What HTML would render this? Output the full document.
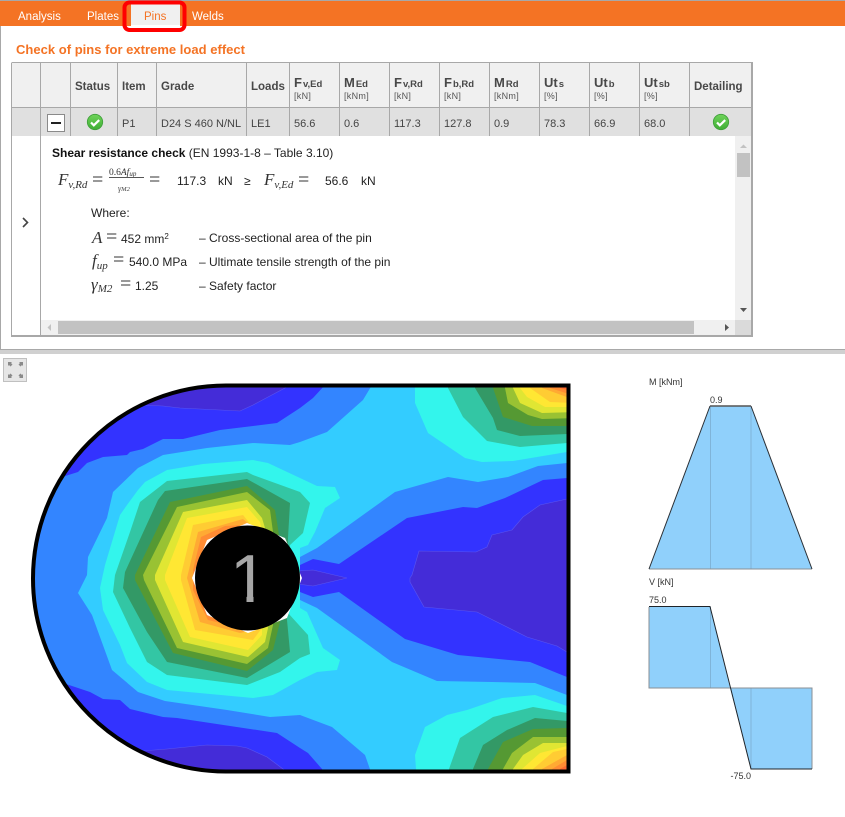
<!DOCTYPE html>
<html><head><meta charset="utf-8"><style>
html,body{margin:0;padding:0;background:#fff;width:845px;height:817px;overflow:hidden}
svg{display:block;position:absolute;left:0;top:0}
text{font-family:"Liberation Sans",Arial,sans-serif;white-space:pre}
.h{font-weight:bold;font-size:11.5px;fill:#484848}
.hb{font-weight:bold;font-size:13px;fill:#484848}
.hs{font-weight:bold;font-size:9.5px;fill:#484848}
.u{font-size:9px;fill:#555;letter-spacing:.3px}
.c{font-size:11px;fill:#444}
.b{font-size:12px;fill:#222}
.m{font-family:"Liberation Serif",serif;font-style:italic;font-size:17px;fill:#333}
.ms{font-family:"Liberation Serif",serif;font-style:italic;font-size:11px;fill:#333}
.eq{font-family:"Liberation Serif",serif;font-size:20px;fill:#333}
.ch{font-size:9px;fill:#333}
.l{stroke:#a8a8a8;stroke-width:1;shape-rendering:crispEdges}
</style></head><body>
<svg width="845" height="817" viewBox="0 0 845 817" xmlns="http://www.w3.org/2000/svg">
<defs><clipPath id="cp"><path d="M568.5 385.5H226A193 193 0 0 0 226 771.5H568.5Z"/></clipPath>
<linearGradient id="g" x1="0" y1="0" x2="0" y2="1"><stop offset="0" stop-color="#6fd35a"/><stop offset="1" stop-color="#3fae35"/></linearGradient></defs>

<!-- top bar -->
<rect x="0" y="0" width="845" height="1" fill="#a8a8a8"/>
<rect x="0" y="1" width="845" height="25" fill="#f47324"/>
<rect x="0" y="26" width="1" height="324" fill="#a8a8a8"/>
<rect x="131" y="4" width="49" height="22" fill="#f0f0f0"/>
<rect x="131" y="25" width="49" height="1" fill="#fff"/>
<text x="18" y="20" font-size="11.5" fill="#fff">Analysis</text>
<text x="87" y="20" font-size="11.5" fill="#fff">Plates</text>
<text x="144" y="20" font-size="11.5" fill="#f47324">Pins</text>
<text x="192" y="20" font-size="11.5" fill="#fff">Welds</text>
<rect x="124.500" y="2.500" width="60" height="27.500" rx="5" fill="none" stroke="#f00" stroke-width="4"/>

<text x="16" y="54" font-size="13" font-weight="bold" fill="#f47324" textLength="229" lengthAdjust="spacing">Check of pins for extreme load effect</text>

<!-- table -->
<rect x="12" y="63" width="740" height="45" fill="#f0f0f0"/>
<rect x="12" y="108" width="740" height="28" fill="#e0e0e0"/>
<g class="l">
<path d="M11.5 62.5H751.5M11.5 107.5H751.5" fill="none"/>
<path d="M70.5 63V136M117.5 63V136M156.5 63V136M246.5 63V136M289.5 63V136M339.5 63V136M389.5 63V136M439.5 63V136M489.5 63V136M539.5 63V136M589.5 63V136M639.5 63V136M689.5 63V136M40.5 63V336M11.5 63V336" fill="none"/>
</g>
<rect x="751" y="62" width="2" height="275" fill="#a8a8a8"/>
<rect x="11" y="335" width="742" height="2" fill="#a8a8a8"/>

<text class="h" x="75" y="90">Status</text>
<text class="h" x="122" y="90">Item</text>
<text class="h" x="161" y="90">Grade</text>
<text class="h" x="251" y="90">Loads</text>
<text class="h" x="694" y="90">Detailing</text>

<text class="hb" x="294" y="87">F<tspan class="hs" dx="1">v,Ed</tspan></text><text class="u" x="294" y="99">[kN]</text>
<text class="hb" x="344" y="87">M<tspan class="hs" dx="1">Ed</tspan></text><text class="u" x="344" y="99">[kNm]</text>
<text class="hb" x="394" y="87">F<tspan class="hs" dx="1">v,Rd</tspan></text><text class="u" x="394" y="99">[kN]</text>
<text class="hb" x="444" y="87">F<tspan class="hs" dx="1">b,Rd</tspan></text><text class="u" x="444" y="99">[kN]</text>
<text class="hb" x="494" y="87">M<tspan class="hs" dx="1">Rd</tspan></text><text class="u" x="494" y="99">[kNm]</text>
<text class="hb" x="544" y="87">Ut<tspan class="hs" dx="1">s</tspan></text><text class="u" x="544" y="99">[%]</text>
<text class="hb" x="594" y="87">Ut<tspan class="hs" dx="1">b</tspan></text><text class="u" x="594" y="99">[%]</text>
<text class="hb" x="644" y="87">Ut<tspan class="hs" dx="1">sb</tspan></text><text class="u" x="644" y="99">[%]</text>

<text class="c" x="122" y="127">P1</text>
<text class="c" x="161" y="127">D24 S 460 N/NL</text>
<text class="c" x="251" y="127">LE1</text>
<text class="c" x="294" y="127">56.6</text>
<text class="c" x="344" y="127">0.6</text>
<text class="c" x="394" y="127">117.3</text>
<text class="c" x="444" y="127">127.8</text>
<text class="c" x="494" y="127">0.9</text>
<text class="c" x="544" y="127">78.3</text>
<text class="c" x="594" y="127">66.9</text>
<text class="c" x="644" y="127">68.0</text>

<rect x="47.500" y="114.500" width="17" height="17" fill="#fff" stroke="#8a8a8a"/>
<rect x="51" y="122" width="10" height="2" fill="#222"/>

<g><circle cx="95" cy="122" r="7.700" fill="url(#g)" stroke="#3f9f3a" stroke-width=".8"/><path d="M91 122.500l2.800 2.800 5.400-5.200" fill="none" stroke="#fff" stroke-width="2.200"/></g>
<g transform="translate(626,0)"><circle cx="95" cy="122" r="7.700" fill="url(#g)" stroke="#3f9f3a" stroke-width=".8"/><path d="M91 122.500l2.800 2.800 5.400-5.200" fill="none" stroke="#fff" stroke-width="2.200"/></g>

<!-- detail -->
<path d="M23 218l4.500 4.500-4.500 4.500" fill="none" stroke="#444" stroke-width="1.600"/>
<text class="b" x="52" y="157"><tspan font-weight="bold" fill="#111">Shear resistance check</tspan> (EN 1993-1-8 – Table 3.10)</text>

<text class="m" x="58" y="185">F<tspan class="ms" dx="0" dy="3">v,Rd</tspan></text>
<text class="eq" x="92" y="186">=</text>
<text font-size="9.500" fill="#333" x="109" y="175" style="font-family:'Liberation Serif',serif" font-style="italic"><tspan font-style="normal">0.6</tspan>Af<tspan font-size="7" dy="1">up</tspan></text>
<rect x="109" y="177" width="35" height="1" fill="#555"/>
<text x="118" y="191" font-size="8" fill="#444" style="font-family:'Liberation Serif',serif" font-style="italic">γ<tspan font-size="6.500">M2</tspan></text>
<text class="eq" x="149" y="186">=</text>
<text class="b" x="177" y="185">117.3</text>
<text class="b" x="218" y="185">kN</text>
<text class="b" x="244" y="185" font-size="10">≥</text>
<text class="m" x="264" y="185">F<tspan class="ms" dy="3">v,Ed</tspan></text>
<text class="eq" x="298" y="186">=</text>
<text class="b" x="325" y="185">56.6</text>
<text class="b" x="361" y="185">kN</text>

<text class="b" x="91" y="217">Where:</text>
<text class="m" x="92" y="243">A</text><text class="eq" x="106" y="243">=</text>
<text class="b" x="121" y="243">452 mm<tspan font-size="8" dy="-4">2</tspan></text>
<text class="b" x="199" y="242">– Cross-sectional area of the pin</text>
<text class="m" x="92" y="266">f<tspan class="ms" dy="3">up</tspan></text><text class="eq" x="113" y="266">=</text>
<text class="b" x="129" y="266">540.0 MPa</text>
<text class="b" x="199" y="266">– Ultimate tensile strength of the pin</text>
<text class="m" x="91" y="290">γ<tspan class="ms" dy="2">M2</tspan></text><text class="eq" x="120" y="290">=</text>
<text class="b" x="135" y="290">1.25</text>
<text class="b" x="199" y="290">– Safety factor</text>

<!-- scrollbars -->
<rect x="735" y="136" width="16" height="184" fill="#f0f0f0"/>
<rect x="737" y="153" width="13" height="24" fill="#c2c2c2"/>
<path d="M740 148l3.500-3.500 3.500 3.500z" fill="#c2c2c2"/>
<path d="M740 308h7l-3.500 4z" fill="#555"/>
<rect x="41" y="320" width="694" height="15" fill="#f0f0f0"/>
<rect x="58" y="321" width="636" height="13" fill="#c2c2c2"/>
<path d="M51 324v7l-3.500-3.500z" fill="#c2c2c2"/>
<path d="M725 324v7l4-3.500z" fill="#555"/>
<rect x="735" y="320" width="16" height="15" fill="#dadada"/>

<!-- splitter -->
<rect x="0" y="349" width="845" height="1" fill="#a8a8a8"/>
<rect x="0" y="350" width="845" height="4" fill="#d0d0d0"/>

<!-- expand -->
<rect x="3.500" y="358.500" width="23" height="23" fill="#e6e6e6" stroke="#c0c0c0"/>
<path d="M8 362h4l-1 1 1.500 1.500-2 2L9 365l-1 1zM23 362h-4l1 1-1.500 1.500 2 2L22 365l1 1zM8 378h4l-1-1 1.500-1.500-2-2L9 375l-1-1zM23 378h-4l1-1-1.500-1.500 2-2L22 375l1-1z" fill="#8a8a8a"/>

<!-- contour -->
<g clip-path="url(#cp)" stroke="none">
<rect x="20" y="380" width="560" height="400" fill="#33ccff"/>
<polygon fill="#3385ff" points="20,385 372,385 363,400 327,432 300,442 290,445 253,443 207,448 163,455 138,468 113,492 107,518 88,557 87,575 78,593 92,615 112,670 138,692 165,701 227,710 270,717 300,715 332,727 365,755 372,775 20,775"/>
<polygon fill="#3333ff" points="20,385 325,385 313,398 300,408 277,423 220,430 183,439 163,439 143,449 130,452 127,455 103,457 87,463 78,472 62,477 20,490"/>
<polygon fill="#3333ff" points="20,670 63,683 90,692 103,699 120,700 130,709 163,717 177,718 277,733 300,748 308,753 322,769 325,775 20,775"/>
<polygon fill="#442cd8" stroke="#5a55f0" stroke-width=".6" points="285,388 253,405 240,411 180,408 163,406 142,405 120,400 135,380 290,380"/>
<polygon fill="#442cd8" stroke="#5a55f0" stroke-width=".6" points="142,751 167,749 207,745 237,746 247,748 267,757 283,769 290,778 130,778 120,755"/>
<polygon fill="#3385ff" points="270,578 300,557 317,548 395,492 448,477 478,482 508,477 538,466 567,463 575,463 575,695 567,695 535,683 492,682 437,681 392,662 317,608 300,600"/>
<polygon fill="#3333ff" points="270,578 300,565 313,559 339,564 407,518 463,507 477,508 505,498 543,480 567,478 575,478 575,680 567,677 557,673 530,662 458,655 405,639 339,592 313,597 300,592"/>
<polygon fill="#442cd8" stroke="#5a55f0" stroke-width=".6" points="410,578 412,575 419,551 476,552 487,547 492,535 512,530 523,517 540,505 567,499 575,499 575,655 567,652 557,646 527,637 477,612 424,607 410,582"/>
<polygon fill="#442cd8" stroke="#5a55f0" stroke-width=".6" points="298,571 313,570 347,578 313,586 298,584"/>

<!-- hole bands -->
<polygon fill="#33f5ec" points="300,548 308,545 315,532 325,508 340,498 335,487 317,486 300,478 268,463 253,460 203,464 167,470 145,482 138,490 127,505 120,515 105,565 100,588 103,610 120,645 127,663 147,682 167,690 253,698 273,695 300,680 317,672 337,670 340,660 323,648 307,612 300,608"/>
<polygon fill="#33c6a4" points="290,545 303,533 310,503 300,492 253,475 247,472 167,481 140,502 130,532 115,575 113,592 130,628 147,662 167,675 247,685 280,672 300,658 310,654 308,635 288,613"/>
<polygon fill="#339966" points="288,538 290,503 247,479 165,491 158,500 125,572 123,588 147,632 167,662 247,678 290,652 287,620"/>
<polygon fill="#559933" points="279,535 275,510 247,486 170,502 135,575 135,580 173,653 247,671 273,650 280,622"/>
<polygon fill="#99c233" points="273,532 270,510 247,492 177,507 143,575 144,580 177,648 247,664 268,648 273,625"/>
<polygon fill="#e0e633" points="265,528 262,518 247,500 183,512 155,575 155,580 183,642 248,657 265,642 268,628"/>
<polygon fill="#ffe733" points="262,530 260,522 247,507 187,518 165,575 165,580 190,637 248,650 262,635 262,625"/>
<polygon fill="#ffcc33" points="255,530 243,515 193,525 181,575 181,580 195,630 253,640 262,628"/>
<polygon fill="#ffaa33" points="250,525 243,519 198,532 187,578 200,622 240,633 255,630"/>
<polygon fill="#ff8c33" points="245,525 225,526 201,537 193,570 193,590 208,620 237,627 245,630"/>
<polygon fill="#fff" points="192,578 207,540 247,523 285,538 302,578 287,618 248,633 207,615"/>

<!-- top right corner -->
<polygon fill="#33f5ec" points="415,380 415,403 428,433 465,458 482,462 513,461 567,452 575,452 575,380"/>
<polygon fill="#33c6a4" points="448,380 448,388 463,417 487,441 520,447 567,443 575,443 575,380"/>
<polygon fill="#339966" points="475,380 475,388 493,418 497,430 520,436 567,434 575,434 575,380"/>
<polygon fill="#559933" points="493,380 493,388 503,417 532,426 567,426 575,426 575,380"/>
<polygon fill="#99c233" points="505,380 505,388 508,403 528,415 542,419 575,418 575,380"/>
<polygon fill="#e0e633" points="513,380 513,388 520,403 542,413 575,412 575,380"/>
<polygon fill="#ffe733" points="520,380 520,388 527,397 545,407 575,407 575,380"/>
<polygon fill="#ffcc33" points="530,380 530,388 550,402 575,403 575,380"/>
<polygon fill="#ffaa33" points="542,380 542,388 575,400 575,380"/>
<polygon fill="#ff8c33" points="550,380 550,388 575,396 575,380"/>
<polygon fill="#ff6b33" points="560,380 560,388 575,392 575,380"/>

<!-- bottom right corner -->
<polygon fill="#33f5ec" points="416,778 416,769 415,755 425,727 447,715 467,710 502,698 535,695 567,706 575,706 575,778"/>
<polygon fill="#33c6a4" points="449,778 449,769 460,738 493,717 533,707 567,713 575,713 575,778"/>
<polygon fill="#339966" points="473,778 473,769 483,745 507,730 535,718 567,721 575,721 575,778"/>
<polygon fill="#559933" points="488,778 488,769 503,742 533,729 567,728 575,728 575,778"/>
<polygon fill="#99c233" points="503,778 503,769 512,753 533,737 567,737 575,737 575,778"/>
<polygon fill="#e0e633" points="513,778 513,769 523,755 543,743 567,743 575,743 575,778"/>
<polygon fill="#ffe733" points="522,778 522,769 540,753 567,746 575,746 575,778"/>
<polygon fill="#ffcc33" points="533,778 533,769 553,752 567,749 575,749 575,778"/>
<polygon fill="#ffaa33" points="542,778 542,769 567,755 575,753 575,778"/>
<polygon fill="#ff8c33" points="552,778 552,769 567,760 575,758 575,778"/>
<polygon fill="#ff6b33" points="560,778 560,769 567,765 575,763 575,778"/>
</g>
<path d="M568.5 385.5H226A193 193 0 0 0 226 771.5H568.5Z" fill="none" stroke="#000" stroke-width="4"/>
<circle cx="247.500" cy="578" r="52.500" fill="#000"/>
<text x="230" y="602" font-size="68" fill="#a6a6a6">1</text>
<!-- mask the foot of the glyph -->
<rect x="225" y="595" width="21.500" height="9" fill="#000"/>
<rect x="253.500" y="595" width="22" height="9" fill="#000"/>

<!-- M chart -->
<text class="ch" x="649" y="385">M [kNm]</text>
<text class="ch" x="710" y="403">0.9</text>
<polygon points="649,569 710,406 751,406 812,569" fill="#90d0fb"/>
<path d="M710.500 406V569M751 406V569" stroke="#7fb4d9" stroke-width="1" fill="none"/>
<path d="M649 569H812" stroke="#8a8f94" stroke-width="1" fill="none"/>
<path d="M649 569L710 406M751 406L812 569" stroke="#2a2f35" stroke-width="1" fill="none"/>
<path d="M710 406H751" stroke="#555" stroke-width="1.500" fill="none"/>

<!-- V chart -->
<text class="ch" x="649" y="585">V [kN]</text>
<text class="ch" x="649" y="603">75.0</text>
<text class="ch" x="751" y="779" text-anchor="end">-75.0</text>
<polygon points="649,607 710,607 730,688 649,688" fill="#90d0fb"/>
<polygon points="730,688 751,769 812,769 812,688" fill="#90d0fb"/>
<path d="M710.500 607V688M751 688V769" stroke="#7fb4d9" stroke-width="1" fill="none"/>
<path d="M649 607V688H812V769" stroke="#8a8f94" stroke-width="1" fill="none"/>
<path d="M649 606.500H710L751 769H812" stroke="#1f2429" stroke-width="1" fill="none"/>
</svg>
</body></html>
